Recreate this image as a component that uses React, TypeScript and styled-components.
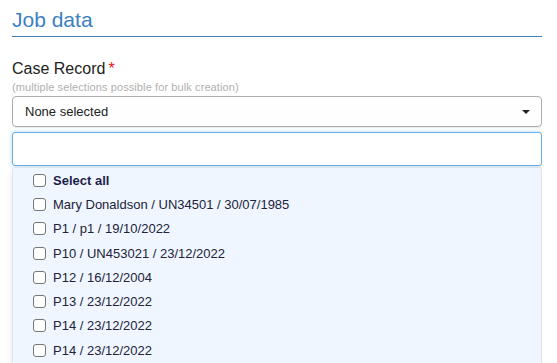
import React from "react";
import styled, { createGlobalStyle } from "styled-components";

const GlobalStyle = createGlobalStyle`
  body {
    margin: 0;
    background: #fff;
    font-family: "Liberation Sans", Arial, sans-serif;
  }
`;

const items = [
  "Mary Donaldson / UN34501 / 30/07/1985",
  "P1 / p1 / 19/10/2022",
  "P10 / UN453021 / 23/12/2022",
  "P12 / 16/12/2004",
  "P13 / 23/12/2022",
  "P14 / 23/12/2022",
  "P14 / 23/12/2022",
];

const App = () => {
  return (
    <Page>
      <GlobalStyle />
      <Title>Job data</Title>
      <Field>
        <Label>
          Case Record<Required>*</Required>
        </Label>
        <Hint>(multiple selections possible for bulk creation)</Hint>
        <SelectButton>
          <span>None selected</span>
          <Caret />
        </SelectButton>
        <Search />
        <Menu>
          <Option $bold>
            <Box />
            Select all
          </Option>
          {items.map((item, i) => (
            <Option key={i}>
              <Box />
              {item}
            </Option>
          ))}
        </Menu>
      </Field>
    </Page>
  );
};

export default App;

const Page = styled.div`
  width: 530px;
  height: 363px;
  padding-left: 12px;
  overflow: hidden;
`;

const Title = styled.h2`
  margin: 0;
  padding-top: 8px;
  height: 28px;
  font-size: 21px;
  font-weight: normal;
  line-height: 24px;
  color: #3a80c3;
  border-bottom: 1px solid #3a80c3;
`;

const Field = styled.div`
  display: flex;
  flex-direction: column;
  padding-top: 22px;
`;

const Label = styled.div`
  font-size: 16px;
  line-height: 20px;
  color: #222;
`;

const Required = styled.span`
  color: #e8141b;
  margin-left: 3px;
`;

const Hint = styled.div`
  font-size: 11px;
  line-height: 13px;
  letter-spacing: 0.1px;
  color: #b0b0b0;
  margin-top: 2px;
`;

const SelectButton = styled.div`
  margin-top: 2px;
  height: 31px;
  box-sizing: border-box;
  display: flex;
  align-items: center;
  justify-content: space-between;
  padding: 0 11px 0 12px;
  border: 1px solid #adadad;
  border-radius: 4px;
  background: linear-gradient(#fff, #fdfdfd);
  box-shadow: 0 1px 1px rgba(0, 0, 0, 0.08);
  font-size: 13px;
  color: #222;
`;

const Caret = styled.span`
  width: 0;
  height: 0;
  border-left: 4px solid transparent;
  border-right: 4px solid transparent;
  border-top: 4px solid #222;
`;

const Search = styled.div`
  margin-top: 5px;
  height: 34px;
  box-sizing: border-box;
  border: 1px solid #66afe9;
  border-radius: 3px;
  background: #fff;
  box-shadow: 0 0 4px rgba(102, 175, 233, 0.5);
`;

const Menu = styled.div`
  margin-top: 1px;
  background: #eff6ff;
  border: 1px solid #dfe4ea;
  border-radius: 3px;
  box-shadow: 2px 4px 10px rgba(0, 0, 0, 0.15);
  height: 220px;
`;

const Option = styled.div<{ $bold?: boolean }>`
  display: flex;
  align-items: center;
  height: 24.3px;
  padding-left: 20px;
  font-size: 13px;
  font-weight: ${(p) => (p.$bold ? "bold" : "normal")};
  color: ${(p) => (p.$bold ? "#1d1d4a" : "#22223a")};
`;

const Box = styled.span`
  width: 11px;
  height: 11px;
  border: 1px solid #767676;
  border-radius: 3px;
  background: #fff;
  margin-right: 7px;
`;
